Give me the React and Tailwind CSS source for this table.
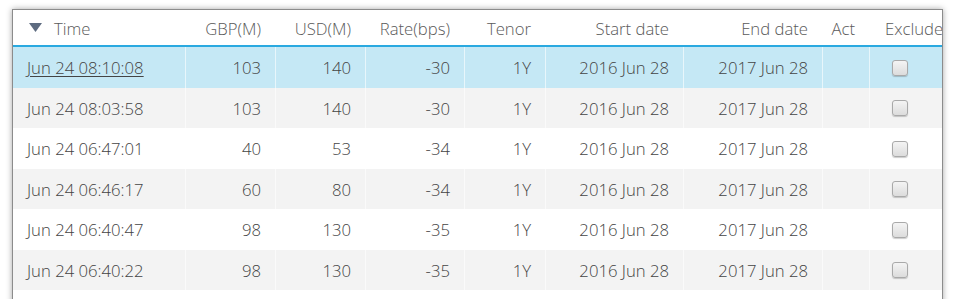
import React from "react";

const cols = [
  { w: 172, align: "left" },
  { w: 90, align: "right" },
  { w: 90, align: "right" },
  { w: 99, align: "right" },
  { w: 81, align: "right" },
  { w: 138, align: "right" },
  { w: 139, align: "right" },
  { w: 47, align: "right" },
  { w: 80, align: "left" },
];

const rows = [
  ["Jun 24 08:10:08", "103", "140", "-30", "1Y", "2016 Jun 28", "2017 Jun 28"],
  ["Jun 24 08:03:58", "103", "140", "-30", "1Y", "2016 Jun 28", "2017 Jun 28"],
  ["Jun 24 06:47:01", "40", "53", "-34", "1Y", "2016 Jun 28", "2017 Jun 28"],
  ["Jun 24 06:46:17", "60", "80", "-34", "1Y", "2016 Jun 28", "2017 Jun 28"],
  ["Jun 24 06:40:47", "98", "130", "-35", "1Y", "2016 Jun 28", "2017 Jun 28"],
  ["Jun 24 06:40:22", "98", "130", "-35", "1Y", "2016 Jun 28", "2017 Jun 28"],
];

function Checkbox() {
  return (
    <div className="ml-[22px] w-[16px] h-[16px] rounded-[3px] border border-[#a9a9a9] bg-gradient-to-b from-[#f4f4f4] to-[#dcdcdc] shadow-[0_1px_1px_rgba(0,0,0,0.2)]" />
  );
}

export default function App() {
  const headers = ["Time", "GBP(M)", "USD(M)", "Rate(bps)", "Tenor", "Start date", "End date", "Act", "Exclude"];
  return (
    <div className="w-[957px] h-[299px] bg-white overflow-hidden" style={{ fontFamily: '"Open Sans", sans-serif' }}>
      <div className="ml-[12px] mt-[9px] w-[931px] h-[320px] border border-[#8c8c8c] bg-white shadow-[0_0_6px_rgba(0,0,0,0.35)] overflow-hidden">
        <div className="flex h-[37px] pt-[3px] items-center text-[16.7px] font-light text-[#5a5a5a] border-b-2 border-[#2aa9e0]">
          {headers.map((h, i) => (
            <div
              key={i}
              style={{ width: cols[i].w }}
              className={
                "shrink-0 whitespace-nowrap " +
                (i === 0 ? "pl-[16px] flex items-center" : i === 8 ? "pl-[16px]" : "text-right pr-[14px]")
              }
            >
              {i === 0 && (
                <svg width="13" height="9" viewBox="0 0 13 9" className="mr-[12px] mb-[2px]">
                  <polygon points="0,0 13,0 6.5,9" fill="#5d6b80" />
                </svg>
              )}
              {h}
            </div>
          ))}
        </div>
        {rows.map((r, ri) => (
          <div
            key={ri}
            className={
              "flex h-[40.5px] items-center text-[16.7px] font-light text-[#444] " +
              (ri === 0 ? "bg-[#c5e8f5]" : ri % 2 === 1 ? "bg-[#f3f3f3]" : "bg-white")
            }
          >
            {cols.map((c, ci) => (
              <div
                key={ci}
                style={{ width: c.w }}
                className={
                  "shrink-0 h-full flex items-center whitespace-nowrap pt-[1px] " +
                  (ci > 0 ? "border-l border-white/60 " : "") +
                  (ci === 0 ? "pl-[14px]" : ci === 8 ? "" : "justify-end pr-[14px]")
                }
              >
                {ci === 8 ? (
                  <Checkbox />
                ) : ci === 7 ? null : ci === 0 && ri === 0 ? (
                  <span className="underline underline-offset-2">{r[0]}</span>
                ) : (
                  r[ci]
                )}
              </div>
            ))}
          </div>
        ))}
      </div>
    </div>
  );
}
